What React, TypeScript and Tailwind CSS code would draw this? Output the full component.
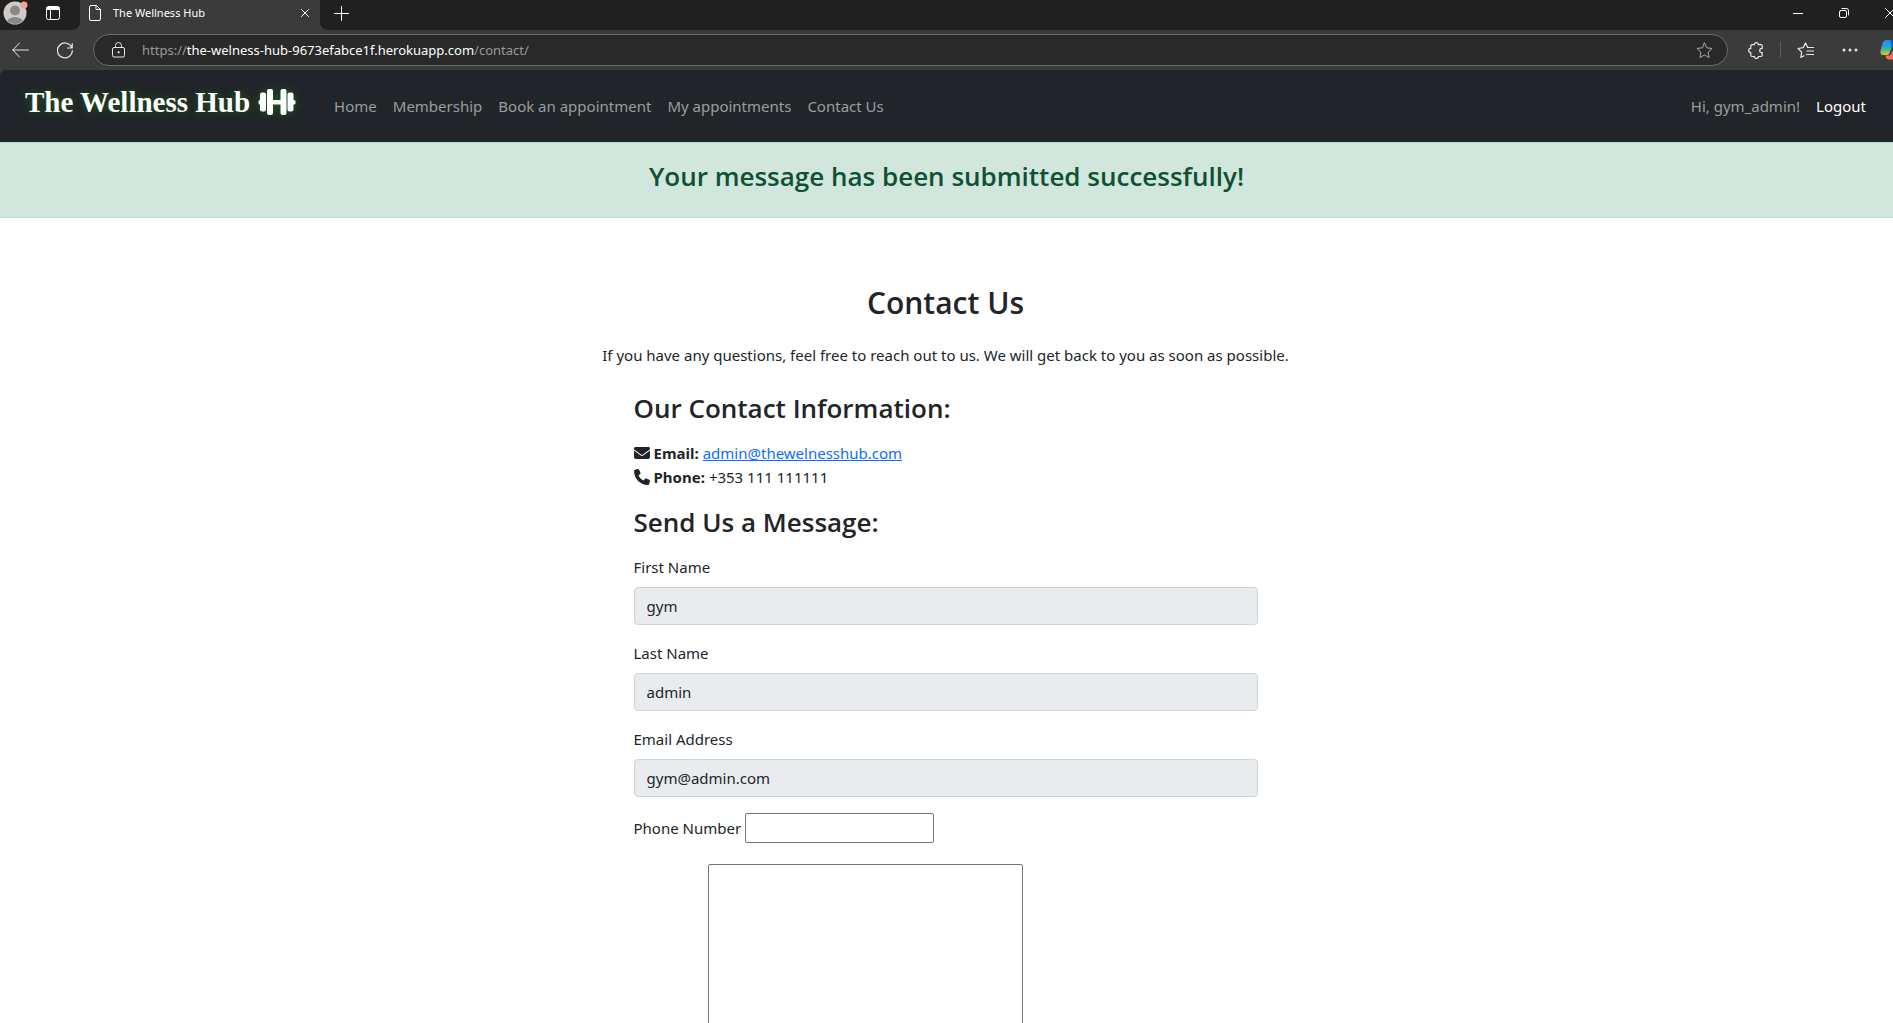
import React from "react";
import { FaEnvelope, FaPhone } from "react-icons/fa6";

const line = {
  fill: "none",
  stroke: "currentColor",
  strokeLinecap: "round" as const,
  strokeLinejoin: "round" as const,
};

function Avatar() {
  return (
    <svg width="26" height="26" viewBox="0 0 26 26" aria-hidden="true">
      <defs>
        <clipPath id="face">
          <circle cx="12" cy="13" r="11" />
        </clipPath>
      </defs>
      <circle cx="12" cy="13" r="11.5" fill="#cfccc7" />
      <g clipPath="url(#face)" fill="#8b8782">
        <circle cx="12" cy="10.5" r="5" />
        <ellipse cx="12" cy="23" rx="8.5" ry="6" />
      </g>
      <circle cx="21" cy="5" r="3.5" fill="#f5a097" />
    </svg>
  );
}

function Dumbbell() {
  return (
    <svg
      width="38"
      height="28"
      viewBox="0 0 38 28"
      fill="#fff"
      aria-hidden="true"
      className="shrink-0 drop-shadow-[0_0_4px_#1c5a1c]"
    >
      <rect x="0.5" y="12" width="4" height="4.5" rx="1.5" />
      <rect x="2" y="4.5" width="6" height="19" rx="2" />
      <rect x="9" y="1" width="6" height="26" rx="2" />
      <rect x="14" y="12" width="10" height="4.5" />
      <rect x="22.5" y="1" width="6" height="26" rx="2" />
      <rect x="29.5" y="4.5" width="6" height="19" rx="2" />
      <rect x="33.5" y="12" width="4" height="4.5" rx="1.5" />
    </svg>
  );
}

function Copilot() {
  return (
    <svg width="24" height="22" viewBox="0 0 24 22" aria-hidden="true">
      <defs>
        <linearGradient id="coolWing" x1="0" y1="0" x2="0" y2="1">
          <stop offset="0" stopColor="#1b8df0" />
          <stop offset=".45" stopColor="#1fa5e0" />
          <stop offset=".75" stopColor="#6fc05a" />
          <stop offset="1" stopColor="#f0c81c" />
        </linearGradient>
        <linearGradient id="warmWing" x1="0" y1="1" x2="1" y2="0">
          <stop offset="0" stopColor="#ff7a3c" />
          <stop offset=".5" stopColor="#f0569a" />
          <stop offset="1" stopColor="#a65be8" />
        </linearGradient>
      </defs>
      <path
        d="M15 7h3.5c4 0 5.500 2.500 4.500 6l-1 3.500c-.8 2.700-2 4-4.500 4H9c-2 0-3-1.500-3.500-4h3c1.500 0 2.300-.8 2.800-2.300z"
        fill="url(#warmWing)"
      />
      <path
        d="M12.500 1c2 0 3 .8 3.600 3l.4 1.500h-2c-1.500 0-2.300.8-2.700 2.300L9.800 13.500c-.5 1.800-1.500 2.500-3 2.500H3.500C.8 16 0 14 .6 11.500L2.300 5C3 2.300 4.200 1 6.500 1z"
        fill="url(#coolWing)"
      />
      <path d="M12.500 1c2 0 3 .8 3.600 3l.4 1.500h-2c-1.500 0-2.300.8-2.700 2.300L10.500 1z" fill="#1b4fc0" />
    </svg>
  );
}

function TabBar() {
  return (
    <div className="flex h-[30px] shrink-0 bg-[#3b3b3b] text-white">
      <div className="flex w-20 shrink-0 items-center gap-[17px] rounded-br-lg bg-[#202020] pl-[3px]">
        <button aria-label="Profile" className="pb-1">
          <Avatar />
        </button>
        <button aria-label="Tab actions" className="pb-1">
          <svg width="14" height="14" viewBox="0 0 14 14" {...line}>
            <rect x=".5" y=".5" width="13" height="13" rx="2" />
            <path d="M1 1.500h12M1 2.500h12M1 3.500h12M4.500 4v9" />
          </svg>
        </button>
      </div>
      <div className="flex w-60 shrink-0 items-center bg-[#3b3b3b] pr-[11px] pb-1 pl-[9px]">
        <svg width="12" height="16" viewBox="0 0 12 16" {...line} aria-hidden="true">
          <path d="M2 .5h5.500l4 4V14a1.500 1.500 0 0 1-1.500 1.500H2A1.500 1.500 0 0 1 .5 14V2A1.500 1.500 0 0 1 2 .5zM7 .5V4.500h4.500" />
        </svg>
        <span className="ml-3 flex-1 text-[11px] leading-4">The Wellness Hub</span>
        <button aria-label="Close tab">
          <svg width="8" height="8" viewBox="0 0 8 8" {...line}>
            <path d="M.5.5l7 7M7.500.5l-7 7" />
          </svg>
        </button>
      </div>
      <div className="flex flex-1 items-center justify-between rounded-bl-lg bg-[#202020] pb-1 pl-[14px]">
        <button aria-label="New tab">
          <svg width="15" height="15" viewBox="0 0 15 15" {...line}>
            <path d="M7.500.5v14M.5 7.500h14" />
          </svg>
        </button>
        <div className="flex w-[100px] shrink-0 items-center justify-between overflow-hidden">
          <button aria-label="Minimize">
            <svg width="10" height="10" viewBox="0 0 10 10" {...line}>
              <path d="M0 5.500h10" />
            </svg>
          </button>
          <button aria-label="Restore">
            <svg width="10" height="10" viewBox="0 0 10 10" {...line}>
              <rect x=".5" y="2.500" width="7" height="7" rx="1.5" />
              <path d="M3 .5h4.500a2 2 0 0 1 2 2V7" />
            </svg>
          </button>
          <button aria-label="Close window" className="w-2 overflow-hidden">
            <svg width="10" height="10" viewBox="0 0 10 10" className="max-w-none" {...line}>
              <path d="M.5.5l9 9M9.500.5l-9 9" />
            </svg>
          </button>
        </div>
      </div>
    </div>
  );
}

function Toolbar() {
  return (
    <div className="flex h-10 shrink-0 items-center overflow-hidden bg-[#3b3b3b] pl-3 text-[#e8e8e8]">
      <button aria-label="Back">
        <svg width="17" height="16" viewBox="0 0 17 16" {...line}>
          <path d="M16.500 8H.8M7.500 1L.8 8l6.700 7" />
        </svg>
      </button>
      <button aria-label="Refresh" className="ml-7">
        <svg width="16" height="17" viewBox="0 0 16 17" {...line} strokeWidth="1.2">
          <path d="M14.900 6A7.400 7.400 0 1 0 15.300 8.500M15.200 1.500V6h-4.700" />
        </svg>
      </button>
      <div className="ml-5 flex h-8 flex-1 items-center rounded-full border border-[#6a6a6a] bg-[#292929] pr-[14px] pl-[18px]">
        <svg width="13" height="16" viewBox="0 0 13 16" {...line} aria-hidden="true">
          <rect x=".5" y="5.500" width="12" height="9.500" rx="1.5" />
          <path d="M3.500 5.500V3.500a3 3 0 0 1 6 0v2" />
          <circle cx="6.5" cy="10.2" r=".6" fill="currentColor" />
        </svg>
        <span className="ml-[17px] flex-1 text-[13px] leading-5 text-[#9a9a9a]">
          https://<span className="text-white">the-welness-hub-9673efabce1f.herokuapp.com</span>/contact/
        </span>
        <button aria-label="Add to favorites" className="text-[#a8a8a8]">
          <svg width="17" height="17" viewBox="0 0 17 17" {...line}>
            <path d="M8.500 1l2.300 4.800 5.200.7-3.800 3.700.9 5.300-4.600-2.500-4.600 2.500.9-5.300L1 6.500l5.200-.7z" />
          </svg>
        </button>
      </div>
      <button aria-label="Extensions" className="ml-5">
        <svg width="16" height="17" viewBox="0 0 16 17" {...line} strokeWidth="1.2">
          <path d="M4 2.700h2.300a2 2 0 0 1 4 0H13a1.200 1.200 0 0 1 1.200 1.200v2.500h-.4a2.100 2.100 0 0 0 0 4.200h.4v2.700a1.200 1.200 0 0 1-1.200 1.200h-2.700a2 2 0 0 1-4 0H4a1.200 1.200 0 0 1-1.200-1.200v-2.700a2.100 2.100 0 0 1 0-4.200V3.900A1.200 1.200 0 0 1 4 2.700z" />
        </svg>
      </button>
      <div className="ml-4 h-4 w-px bg-[#5c5c5c]" />
      <button aria-label="Favorites" className="ml-4">
        <svg width="17" height="17" viewBox="0 0 17 17" {...line} strokeWidth="1.2">
          <path d="M10.500 5L8.500 1 6.200 5.700 1 6.500l3.700 3.700-.9 5.300 3.200-1.700M10.500 5.500h6M10 9h6.500M9.500 12.500h7" />
        </svg>
      </button>
      <button aria-label="Settings and more" className="ml-7">
        <svg width="16" height="4" viewBox="0 0 16 4" fill="currentColor">
          <circle cx="2" cy="2" r="1.5" />
          <circle cx="8" cy="2" r="1.5" />
          <circle cx="14" cy="2" r="1.5" />
        </svg>
      </button>
      <button aria-label="Copilot" className="ml-[22px] w-[13px] shrink-0 overflow-hidden">
        <div className="w-6">
          <Copilot />
        </div>
      </button>
    </div>
  );
}

const links = ["Home", "Membership", "Book an appointment", "My appointments", "Contact Us"];

function Navbar() {
  return (
    <nav className="flex h-18 items-center bg-[#212529] pr-[27px] pl-[25px] text-[#9b9d9e]">
      <a
        href="#home"
        className="flex items-center gap-2 pb-2 font-['Liberation_Serif',serif] text-[29px] leading-9 font-bold whitespace-nowrap text-white [text-shadow:0_0_8px_#1c5a1c]"
      >
        The Wellness Hub
        <Dumbbell />
      </a>
      <ul className="ml-[38px] flex flex-1 gap-4 whitespace-nowrap">
        {links.map((label) => (
          <li key={label}>
            <a href={"#" + label.toLowerCase().replace(/ /g, "-")}>{label}</a>
          </li>
        ))}
      </ul>
      <span>Hi, gym_admin!</span>
      <a href="#logout" className="ml-4 text-white">
        Logout
      </a>
    </nav>
  );
}

function ReadOnlyField({ id, label, value }: { id: string; label: string; value: string }) {
  return (
    <div className="mb-4">
      <label htmlFor={id} className="mb-2 block">
        {label}
      </label>
      <input
        id={id}
        readOnly
        value={value}
        className="block h-[38px] w-full rounded border border-[#ced4da] bg-[#e9ecef] px-3"
      />
    </div>
  );
}

export default function App() {
  return (
    <div className="flex h-screen flex-col overflow-hidden bg-[#3b3b3b] font-['Noto_Sans',sans-serif] text-[15px] leading-6 text-[#212529]">
      <TabBar />
      <Toolbar />
      <div className="flex min-h-0 flex-1 flex-col overflow-hidden rounded-tl-md">
        <Navbar />
        <div role="alert" className="border-y border-[#badbcc] bg-[#d1e7dd] pt-4 pb-6 text-center text-[#0f5132]">
          <h4 className="font-['Open_Sans',sans-serif] text-[26px] leading-[34px] font-semibold">
            Your message has been submitted successfully!
          </h4>
        </div>
        <main className="min-h-0 flex-1 bg-white pt-[66px] pr-[14px] pl-3">
          <h2 className="text-center font-['Open_Sans',sans-serif] text-[30px] leading-[38px] font-semibold">
            Contact Us
          </h2>
          <p className="mt-[21px] text-center">
            If you have any questions, feel free to reach out to us. We will get back to you as soon as possible.
          </p>
          <div className="mx-auto mt-6 max-w-[624px]">
            <h3 className="font-['Open_Sans',sans-serif] text-[26px] leading-[34px] font-semibold">
              Our Contact Information:
            </h3>
            <ul className="mt-4">
              <li className="flex items-center gap-1">
                <FaEnvelope size={16} />
                <strong>Email:</strong>
                <a href="mailto:admin@thewelnesshub.com" className="text-[#0d6efd] underline">
                  admin@thewelnesshub.com
                </a>
              </li>
              <li className="flex items-center gap-1">
                <FaPhone size={16} />
                <strong>Phone:</strong>
                <span>+353 111 111111</span>
              </li>
            </ul>
            <form>
              <h3 className="my-4 font-['Open_Sans',sans-serif] text-[26px] leading-[34px] font-semibold">
                Send Us a Message:
              </h3>
              <ReadOnlyField id="first-name" label="First Name" value="gym" />
              <ReadOnlyField id="last-name" label="Last Name" value="admin" />
              <ReadOnlyField id="email" label="Email Address" value="gym@admin.com" />
              <div className="flex items-center gap-1">
                <label htmlFor="phone">Phone Number</label>
                <input id="phone" type="tel" className="h-[30px] w-[189px] rounded-xs border border-[#767676] px-px" />
              </div>
              <textarea
                aria-label="Message"
                rows={10}
                className="mt-[21px] ml-[74px] block w-[315px] resize-none rounded-xs border border-[#767676] p-0.5"
              />
            </form>
          </div>
        </main>
      </div>
    </div>
  );
}
